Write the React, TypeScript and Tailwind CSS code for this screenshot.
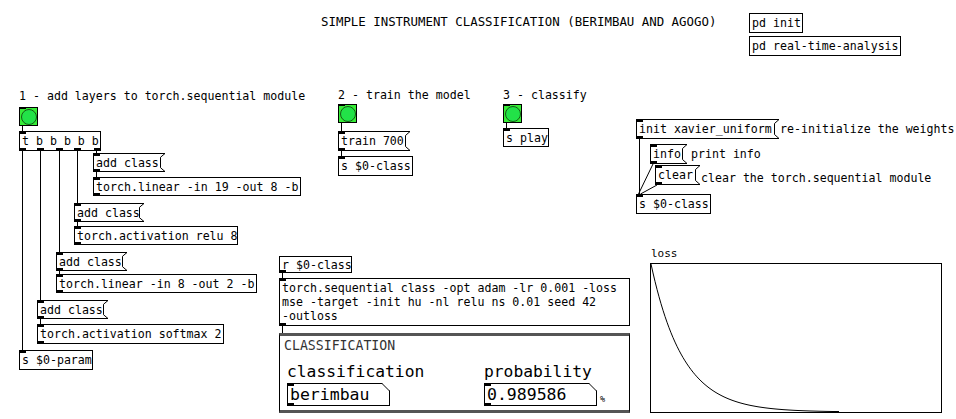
import type { ReactNode } from 'react';

type NodeProps = {
  pos: string;
  children: ReactNode;
  kind?: 'obj' | 'msg';
  inlet?: boolean;
  outlet?: boolean;
};

// pd box: object (plain rect) or message (bracket flag on the right).
// `pos` carries the positioning: absolute on the canvas, or relative inside a group
const Node = ({ pos, children, kind = 'obj', inlet = true, outlet = true }: NodeProps) => (
  <div
    className={`flex shrink-0 whitespace-pre pl-[2px] ${
      kind === 'msg' ? 'border-y border-l border-black pr-[7px]' : 'border border-black pr-[2px]'
    } ${pos}`}
  >
    {children}
    {inlet && <span className="absolute -left-px -top-px h-[3px] w-[7px] bg-black" />}
    {outlet && <span className="absolute -bottom-px -left-px h-[3px] w-[7px] bg-black" />}
    {kind === 'msg' && (
      <svg
        className="absolute -top-px right-0 h-[calc(100%+2px)] w-[5px]"
        viewBox="0 0 5 20"
        preserveAspectRatio="none"
      >
        <path d="M5 0.5 L0.5 4.5 V15.5 L5 19.5" fill="none" stroke="black" strokeWidth="1" vectorEffect="non-scaling-stroke" />
      </svg>
    )}
  </div>
);

const Atom = ({ size, children }: { size: string; children: ReactNode }) => (
  <div className={`relative flex items-center border border-black pl-[2px] text-[16.5px] leading-[20px] ${size}`}>
    {children}
    <span className="absolute -left-px -top-px h-[3px] w-[7px] bg-black" />
    <span className="absolute -bottom-px -left-px h-[3px] w-[7px] bg-black" />
    <svg className="absolute -right-px -top-px h-[8px] w-[8px]" viewBox="0 0 8 8">
      <polygon points="0,0 8,0 8,8" fill="white" />
      <line x1="0" y1="0.5" x2="7.5" y2="8" stroke="black" strokeWidth="1" />
    </svg>
  </div>
);

const Bang = ({ pos }: { pos: string }) => (
  <div className={`flex h-[19px] w-[19px] items-center justify-center border border-black bg-[#36ec36] ${pos}`}>
    <div className="h-[16px] w-[16px] rounded-full border border-[#155a15] bg-[#22e248]" />
    <span className="absolute -left-px -top-px h-[2px] w-[7px] bg-black" />
  </div>
);

const wires: [number, number, number, number][] = [
  [22.5, 126, 22.5, 131],
  [22.5, 151, 22.5, 350],
  [40.5, 151, 40.5, 300],
  [59.5, 151, 59.5, 252],
  [77.5, 151, 77.5, 203],
  [96.5, 151, 96.5, 153],
  [96.5, 172, 96.5, 177],
  [77.5, 222, 77.5, 226],
  [59.5, 271, 59.5, 274],
  [40.5, 319, 40.5, 324],
  [341.5, 123, 341.5, 131],
  [341.5, 151, 341.5, 156],
  [506.5, 123, 506.5, 128],
  [639.5, 139, 639.5, 194],
  [653, 164, 638.5, 194],
  [657, 185, 640.5, 194],
  [282.5, 273, 282.5, 278],
  [282.5, 326, 282.5, 333],
];

const lossPoints = Array.from({ length: 95 }, (_, i) => {
  const dx = i * 2;
  const dy = Math.min(147.5, 148 * (1 - Math.exp(-dx / 32)));
  return `${dx},${dy.toFixed(2)}`;
}).join(' ');

export default function App() {
  return (
    <div className="relative h-[419px] w-[956px] overflow-hidden bg-white font-['DejaVu_Sans_Mono',monospace] text-[11.6px] leading-[14px] text-black">
      <svg className="pointer-events-none absolute inset-0 h-full w-full" viewBox="0 0 956 419">
        {wires.map(([x1, y1, x2, y2], i) => (
          <line key={i} x1={x1} y1={y1} x2={x2} y2={y2} stroke="black" strokeWidth="1" />
        ))}
      </svg>

      {/* header */}
      <div className="absolute left-[321px] top-[15px] whitespace-pre text-[12.4px]">
        SIMPLE INSTRUMENT CLASSIFICATION (BERIMBAU AND AGOGO)
      </div>
      <div className="absolute left-[749px] top-[13px] flex flex-col items-start gap-[3px]">
        <Node pos="relative h-[20px] w-[54px] items-center" inlet={false} outlet={false}>pd init</Node>
        <Node pos="relative h-[20px] w-[152px] items-center" inlet={false} outlet={false}>pd real-time-analysis</Node>
      </div>

      {/* 1 - layers */}
      <div className="absolute left-[19px] top-[89px] whitespace-pre">1 - add layers to torch.sequential module</div>
      <Bang pos="absolute left-[19px] top-[107px]" />
      <Node pos="absolute left-[19px] top-[131px] h-[20px] w-[82px] items-center" outlet={false}>
        t b b b b b
        <span className="absolute -bottom-px -left-px h-[3px] w-[7px] bg-black" />
        <span className="absolute -bottom-px left-[17px] h-[3px] w-[7px] bg-black" />
        <span className="absolute -bottom-px left-[36px] h-[3px] w-[7px] bg-black" />
        <span className="absolute -bottom-px left-[54px] h-[3px] w-[7px] bg-black" />
        <span className="absolute -bottom-px -right-px h-[3px] w-[7px] bg-black" />
      </Node>

      <Node kind="msg" pos="absolute left-[93px] top-[153px] h-[19px] w-[72px] items-center">add class</Node>
      <Node pos="absolute left-[93px] top-[177px] h-[19px] w-[208px] items-center">torch.linear -in 19 -out 8 -b</Node>
      <Node kind="msg" pos="absolute left-[74px] top-[203px] h-[19px] w-[70px] items-center">add class</Node>
      <Node pos="absolute left-[74px] top-[226px] h-[19px] w-[164px] items-center">torch.activation relu 8</Node>
      <Node kind="msg" pos="absolute left-[56px] top-[252px] h-[19px] w-[71px] items-center">add class</Node>
      <Node pos="absolute left-[56px] top-[274px] h-[19px] w-[201px] items-center">torch.linear -in 8 -out 2 -b</Node>
      <Node kind="msg" pos="absolute left-[37px] top-[300px] h-[19px] w-[71px] items-center">add class</Node>
      <Node pos="absolute left-[37px] top-[324px] h-[20px] w-[187px] items-center">torch.activation softmax 2</Node>
      <Node pos="absolute left-[19px] top-[350px] h-[20px] w-[74px] items-center" outlet={false}>s $0-param</Node>

      {/* 2 - train */}
      <div className="absolute left-[338px] top-[88px] flex flex-col items-start">
        <span className="whitespace-pre">2 - train the model</span>
        <Bang pos="relative mt-[2px]" />
        <Node kind="msg" pos="relative mt-[8px] h-[20px] w-[72px] items-center">train 700</Node>
        <Node pos="relative mt-[5px] h-[20px] w-[75px] items-center" outlet={false}>s $0-class</Node>
      </div>

      {/* 3 - classify */}
      <div className="absolute left-[503px] top-[88px] flex flex-col items-start">
        <span className="whitespace-pre">3 - classify</span>
        <Bang pos="relative mt-[2px]" />
        <Node pos="relative mt-[5px] h-[19px] w-[46px] items-center" outlet={false}>s play</Node>
      </div>

      {/* utility messages */}
      <div className="absolute left-[636px] top-[119px] flex flex-col items-start">
        <div className="flex items-center">
          <Node kind="msg" pos="relative h-[20px] w-[143px] items-center">init xavier_uniform</Node>
          <span className="ml-px whitespace-pre">re-initialize the weights</span>
        </div>
        <div className="ml-[14px] mt-[5px] flex items-center">
          <Node kind="msg" pos="relative h-[20px] w-[37px] items-center">info</Node>
          <span className="ml-[4px] whitespace-pre">print info</span>
        </div>
        <div className="ml-[19px] mt-px flex items-start">
          <Node kind="msg" pos="relative h-[20px] w-[45px] items-center">clear</Node>
          <span className="ml-px mt-[6px] whitespace-pre">clear the torch.sequential module</span>
        </div>
        <Node pos="relative mt-[9px] h-[20px] w-[75px] items-center" outlet={false}>s $0-class</Node>
      </div>

      {/* model + result panel */}
      <div className="absolute left-[279px] top-[256px] flex flex-col items-start">
        <Node pos="relative h-[17px] w-[73px] items-center" inlet={false}>r $0-class</Node>
        <Node pos="relative mt-[5px] h-[48px] w-[351px] items-start pt-[2px]">
          <span>
            torch.sequential class -opt adam -lr 0.001 -loss
            <br />
            mse -target -init hu -nl relu ns 0.01 seed 42
            <br />
            -outloss
          </span>
        </Node>
        <div className="mt-[7px] flex h-[80px] w-[351px] flex-col border-x border-y-[3px] border-x-black border-y-[#555]">
          <div className="pl-[4px] pt-[2px] text-[13.2px] leading-[16px] text-[#333]">CLASSIFICATION</div>
          <div className="mt-[8px] grid grid-cols-[197px_auto] pl-[7px]">
            <div className="flex flex-col items-start">
              <span className="text-[16.3px] leading-[20px]">classification</span>
              <div className="mt-px">
                <Atom size="h-[23px] w-[103px]">berimbau</Atom>
              </div>
            </div>
            <div className="flex flex-col items-start">
              <span className="text-[16.3px] leading-[20px]">probability</span>
              <div className="mt-px flex items-end">
                <Atom size="h-[23px] w-[113px]">0.989586</Atom>
                <span className="mb-[2px] ml-[3px] text-[8.5px] leading-[10px]">%</span>
              </div>
            </div>
          </div>
        </div>
      </div>

      {/* loss graph */}
      <div className="absolute left-[650px] top-[247px] flex flex-col items-start">
        <span className="ml-px text-[11px] leading-[14px]">loss</span>
        <div className="relative mt-[2px] h-[150px] w-[292px] border border-black">
          <svg className="absolute inset-0 h-full w-full" viewBox="0 0 290 148">
            <polyline points={lossPoints} fill="none" stroke="black" strokeWidth="1" />
          </svg>
        </div>
      </div>
    </div>
  );
}
